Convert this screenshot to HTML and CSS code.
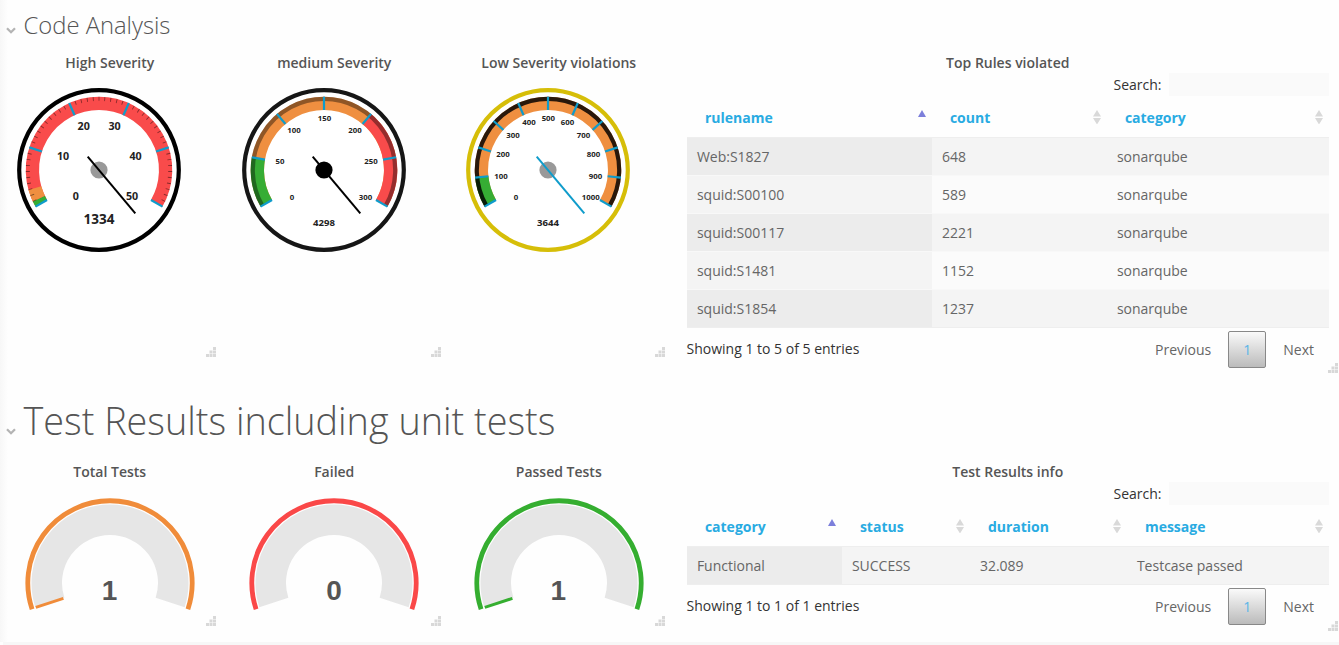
FILE: index.html
```html
<!DOCTYPE html>
<html lang="en">
<head>
<meta charset="utf-8">
<title>Code Analysis</title>
<link rel="stylesheet" href="styles.css">
</head>
<body>
<svg class="defs" width="0" height="0">
  <defs>
    <path id="tick" d="M0-60V-73.3"/>
    <path id="band" d="M-57.7 33.3A66.6 66.6 0 1 1 57.7 33.3"/>
    <path id="shade" d="M-61.7 35.6A71.2 71.2 0 1 1 61.7 35.6"/>
    <path id="grip" d="M7 0h3v3h-3zM7 3.5h3v3h-3zM7 7h3v3h-3zM3.5 3.5h3v3h-3zM3.5 7h3v3h-3zM0 7h3v3h-3z"/>
    <path id="updown" d="M4 0L8 6.5H0zM0 8H8L4 14.5z"/>
  </defs>
</svg>
<section class="row code">
  <h2 class="heading small"><svg class="chev" viewBox="0 0 10 7"><path d="M1 1.2L5 5.2L9 1.2"/></svg><span>Code Analysis</span></h2>
  <div class="tiles">
    <article class="tile">
      <h3>High Severity</h3>
      <svg class="dial" viewBox="-84 -84 168 168">
        <circle class="rim" r="79.8"/>
        <use href="#band" class="band red"/>
        <path class="band green" d="M-57.7 33.3A66.6 66.6 0 0 1 -60.16 28.58"/>
        <path class="band orange" d="M-60.16 28.58A66.6 66.6 0 0 1 -64.1 18.1"/>
        <path class="minor" pathLength="240" d="M-61.7 35.6A71.2 71.2 0 1 1 61.7 35.6"/>
        <g class="ticks"><use href="#tick" transform="rotate(-120)"/><use href="#tick" transform="rotate(-72)"/><use href="#tick" transform="rotate(-24)"/><use href="#tick" transform="rotate(24)"/><use href="#tick" transform="rotate(72)"/><use href="#tick" transform="rotate(120)"/></g>
        <g class="nums big"><text x="-23.3" y="30">0</text><text x="-36" y="-10">10</text><text x="-15.3" y="-40">20</text><text x="15.5" y="-40">30</text><text x="36.5" y="-10">40</text><text x="33" y="30">50</text></g>
        <text class="total large" y="54">1334</text>
        <circle class="hub" r="8.6"/>
        <path class="needle" d="M-11.3-13.3L36.3 43.3"/>
      </svg>
      <svg class="grip" viewBox="0 0 10 10"><use href="#grip"/></svg>
    </article>
    <article class="tile">
      <h3>medium Severity</h3>
      <svg class="dial" viewBox="-84 -84 168 168">
        <circle class="rim soft" r="79.8"/>
        <use href="#band" class="band orange"/>
        <path class="band green" d="M-57.7 33.3A66.6 66.6 0 0 1 -65.6 -11.56"/>
        <path class="band red" d="M42.8-51A66.6 66.6 0 0 1 57.7 33.3"/>
        <use href="#shade" class="shade light"/>
        <g class="ticks"><use href="#tick" transform="rotate(-120)"/><use href="#tick" transform="rotate(-80)"/><use href="#tick" transform="rotate(-40)"/><use href="#tick"/><use href="#tick" transform="rotate(40)"/><use href="#tick" transform="rotate(80)"/><use href="#tick" transform="rotate(120)"/></g>
        <g class="nums"><text x="-32" y="30.3">0</text><text x="-44" y="-5.7">50</text><text x="-30" y="-36.7">100</text><text x=".5" y="-48.7">150</text><text x="31" y="-36.7">200</text><text x="47" y="-5.7">250</text><text x="41.5" y="30.3">300</text></g>
        <text class="total" y="56">4298</text>
        <circle r="8.6"/>
        <path class="needle" d="M-11.3-13.3L36.3 43.3"/>
      </svg>
      <svg class="grip" viewBox="0 0 10 10"><use href="#grip"/></svg>
    </article>
    <article class="tile">
      <h3>Low Severity violations</h3>
      <svg class="dial" viewBox="-84 -84 168 168">
        <circle class="rim yellow" r="79.8"/>
        <use href="#band" class="band orange"/>
        <path class="band green" d="M-57.7 33.3A66.6 66.6 0 0 1 -66.2 7"/>
        <use href="#shade" class="shade dark"/>
        <g class="ticks"><use href="#tick" transform="rotate(-120)"/><use href="#tick" transform="rotate(-96)"/><use href="#tick" transform="rotate(-72)"/><use href="#tick" transform="rotate(-48)"/><use href="#tick" transform="rotate(-24)"/><use href="#tick"/><use href="#tick" transform="rotate(24)"/><use href="#tick" transform="rotate(48)"/><use href="#tick" transform="rotate(72)"/><use href="#tick" transform="rotate(96)"/><use href="#tick" transform="rotate(120)"/></g>
        <g class="nums"><text x="-32" y="30.3">0</text><text x="-47" y="9.3">100</text><text x="-45" y="-12.7">200</text><text x="-35" y="-31.7">300</text><text x="-19" y="-44.7">400</text><text x=".3" y="-48.7">500</text><text x="19.5" y="-44.7">600</text><text x="35.5" y="-31.7">700</text><text x="45.5" y="-12.7">800</text><text x="47.5" y="9.3">900</text><text x="42.7" y="30.3">1000</text></g>
        <text class="total" y="56">3644</text>
        <circle class="hub" r="8.6"/>
        <path class="needle blue" d="M-11.3-13.3L36.3 43.3"/>
      </svg>
      <svg class="grip" viewBox="0 0 10 10"><use href="#grip"/></svg>
    </article>
    <article class="tile wide">
      <h3>Top Rules violated</h3>
      <label class="search">Search:<input type="text"></label>
      <table>
        <colgroup><col style="width:245px"><col style="width:175px"><col style="width:222px"></colgroup>
        <thead><tr>
          <th><div>rulename<svg class="asc" viewBox="0 0 8 7"><path d="M4 0L8 7H0z"/></svg></div></th>
          <th><div>count<svg class="both" viewBox="0 0 8 14.5"><use href="#updown"/></svg></div></th>
          <th><div>category<svg class="both" viewBox="0 0 8 14.5"><use href="#updown"/></svg></div></th>
        </tr></thead>
        <tbody>
          <tr><td>Web:S1827</td><td>648</td><td>sonarqube</td></tr>
          <tr><td>squid:S00100</td><td>589</td><td>sonarqube</td></tr>
          <tr><td>squid:S00117</td><td>2221</td><td>sonarqube</td></tr>
          <tr><td>squid:S1481</td><td>1152</td><td>sonarqube</td></tr>
          <tr><td>squid:S1854</td><td>1237</td><td>sonarqube</td></tr>
        </tbody>
      </table>
      <footer><span class="info">Showing 1 to 5 of 5 entries</span><a>Previous</a><a class="current">1</a><a>Next</a></footer>
      <svg class="grip" viewBox="0 0 10 10"><use href="#grip"/></svg>
    </article>
  </div>
</section>
<section class="row tests">
  <h2 class="heading large"><svg class="chev" viewBox="0 0 10 7"><path d="M1 1.2L5 5.2L9 1.2"/></svg><span>Test Results including unit tests</span></h2>
  <div class="tiles">
    <article class="tile">
      <h3>Total Tests</h3>
      <svg class="arc orange" viewBox="-86 -86 172 116"><path class="track" d="M-60.15 19.55A63.25 63.25 0 1 1 60.15 19.55"/><path class="outer" d="M-77.9 26.2A82.2 82.2 0 1 1 77.9 26.2"/><path class="mark" d="M-74.2 24.4L-46.6 15.4"/><text x="-.5" y="16.9">1</text></svg>
      <svg class="grip" viewBox="0 0 10 10"><use href="#grip"/></svg>
    </article>
    <article class="tile">
      <h3>Failed</h3>
      <svg class="arc red" viewBox="-86 -86 172 116"><path class="track" d="M-60.15 19.55A63.25 63.25 0 1 1 60.15 19.55"/><path class="outer" d="M-77.9 26.2A82.2 82.2 0 1 1 77.9 26.2"/><text y="16.9">0</text></svg>
      <svg class="grip" viewBox="0 0 10 10"><use href="#grip"/></svg>
    </article>
    <article class="tile">
      <h3>Passed Tests</h3>
      <svg class="arc green" viewBox="-86 -86 172 116"><path class="track" d="M-60.15 19.55A63.25 63.25 0 1 1 60.15 19.55"/><path class="outer" d="M-77.9 26.2A82.2 82.2 0 1 1 77.9 26.2"/><path class="mark" d="M-74.2 24.4L-46.6 15.4"/><text x="-.7" y="16.9">1</text></svg>
      <svg class="grip" viewBox="0 0 10 10"><use href="#grip"/></svg>
    </article>
    <article class="tile wide">
      <h3>Test Results info</h3>
      <label class="search">Search:<input type="text"></label>
      <table>
        <colgroup><col style="width:155px"><col style="width:128px"><col style="width:157px"><col style="width:202px"></colgroup>
        <thead><tr>
          <th><div>category<svg class="asc" viewBox="0 0 8 7"><path d="M4 0L8 7H0z"/></svg></div></th>
          <th><div>status<svg class="both" viewBox="0 0 8 14.5"><use href="#updown"/></svg></div></th>
          <th><div>duration<svg class="both" viewBox="0 0 8 14.5"><use href="#updown"/></svg></div></th>
          <th><div>message<svg class="both" viewBox="0 0 8 14.5"><use href="#updown"/></svg></div></th>
        </tr></thead>
        <tbody><tr><td>Functional</td><td>SUCCESS</td><td>32.089</td><td>Testcase passed</td></tr></tbody>
      </table>
      <footer><span class="info">Showing 1 to 1 of 1 entries</span><a>Previous</a><a class="current">1</a><a>Next</a></footer>
      <svg class="grip" viewBox="0 0 10 10"><use href="#grip"/></svg>
    </article>
  </div>
</section>
<div class="divider"></div>
</body>
</html>
```
FILE: styles.css
```css
* { box-sizing: border-box; }
body {
  margin: 0;
  height: 645px;
  overflow: hidden;
  background: #fefefe;
  font-family: "Open Sans", "Noto Sans", sans-serif;
  font-size: 14px;
  color: #666;
}
.defs { position: absolute; }
.row { padding-left: 2.5px; background: linear-gradient(90deg, #f7f7f7, #fefefe 8px); }
.code { height: 393px; }
.tests { height: 249px; }
.heading {
  display: flex;
  margin: 0;
  padding-left: 3px;
  gap: 8px;
  font-weight: 300;
  color: #555;
  white-space: nowrap;
}
.small { height: 53px; font-size: 23.8px; line-height: 51px; }
.large { height: 69px; font-size: 37.8px; line-height: 56px; }
.chev { width: 10px; height: 7px; fill: none; stroke: #b4b4b4; stroke-width: 2.3; }
.small .chev { margin-top: 26.5px; }
.large .chev { margin-top: 35px; }
.tiles {
  display: grid;
  grid-template-columns: repeat(3, 214.5px) 662px;
  column-gap: 10px;
  align-items: start;
}
.tile { position: relative; height: 304.4px; }
.tile.wide { height: 320.4px; padding: 0 9px 0 10.5px; }
.tests .tile { height: 164.4px; }
.tests .tile.wide { height: 169.4px; }
h3 { margin: 0; height: 20px; font-size: 14px; line-height: 20px; font-weight: 600; text-align: center; color: #555; }
.grip { position: absolute; right: .7px; bottom: 0; width: 10px; height: 10px; fill: #d8d8d8; }
.wide .grip { right: 0; }
.dial { display: block; width: 168px; height: 168px; margin: 12.7px 0 0 12.8px; }
.rim { fill: #fff; stroke: #000; stroke-width: 4.2; }
.rim.soft { stroke: #161616; }
.rim.yellow { stroke: #d6be08; }
.band { fill: none; stroke-width: 13.3; }
.band.red { stroke: #f94b4b; }
.band.orange { stroke: #ef8f40; }
.band.green { stroke: #36ad34; }
.shade { fill: none; stroke-width: 4.2; stroke: #000; }
.shade.light { stroke-opacity: .4; }
.shade.dark { stroke-opacity: .83; }
.minor { fill: none; stroke: #000; stroke-opacity: .45; stroke-width: 4; stroke-dasharray: .7 4.1; stroke-dashoffset: .35; }
.ticks { stroke: #0f9ccb; stroke-width: 2.2; }
.nums, .total { font-weight: 700; fill: #222; text-anchor: middle; }
.nums { font-size: 7.8px; }
.nums.big { font-size: 10.7px; }
.total { font-size: 9.6px; }
.total.large { font-size: 13.5px; }
.hub { fill: #999; }
.needle { stroke: #000; stroke-width: 2; }
.needle.blue { stroke: #0f9ccb; }
.arc { display: block; width: 172px; height: 116px; margin: 14.5px auto 0; fill: none; }
.arc.orange { stroke: #f08c3a; }
.arc.red { stroke: #fa4848; }
.arc.green { stroke: #35ae30; }
.outer { stroke-width: 4.8; }
.mark { stroke-width: 3; }
.track { stroke: #e6e6e6; stroke-width: 30.5; }
.arc text { fill: #555; stroke: none; text-anchor: middle; font: 700 28px "Liberation Sans", sans-serif; }
.search { display: flex; justify-content: flex-end; gap: 7.5px; height: 24px; line-height: 24px; color: #333; }
.search input { width: 160px; height: 23px; border: 0; padding: 0; background: #fafafa; }
table { width: 642px; table-layout: fixed; border-collapse: separate; border-spacing: 0; }
th { height: 41px; padding: 0 6px 0 18.4px; text-align: left; font-weight: 700; color: #29abe2; border-bottom: 1px solid #eee; }
th div { display: flex; align-items: center; justify-content: space-between; }
.both { width: 8px; height: 14.5px; fill: #d9d9d9; }
.asc { width: 8px; height: 7px; fill: #7c7fdb; margin-top: -8px; }
td { height: 38px; padding: 0 10.4px; background: #f4f4f4; border-bottom: 1px solid #f8f8f8; }
td:first-child { background: #ececec; }
tr:nth-child(even) td { background: #fbfbfb; }
tr:nth-child(even) td:first-child { background: #f4f4f4; }
tr:last-child td { border-bottom-color: #eee; }
footer { display: flex; align-items: center; height: 43px; }
.info { margin-right: auto; padding-bottom: 2px; color: #333; }
footer a { padding: 0 15px; }
footer .current {
  width: 38px;
  height: 37px;
  margin: 0 2px;
  padding: 0;
  text-align: center;
  line-height: 35px;
  color: #5bb5e8;
  border: 1px solid #888;
  border-radius: 2px;
  background: linear-gradient(#fafafa, #bbb);
}
.divider { height: 3px; margin-left: 3px; background: #f7f7f7; }
```
